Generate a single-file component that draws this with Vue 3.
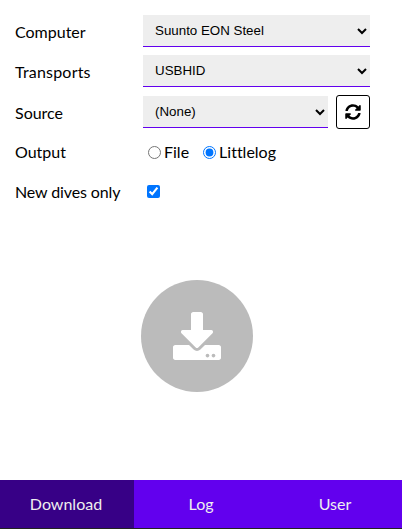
<script setup>
import { ref } from 'vue'

const computer = ref('Suunto EON Steel')
const transport = ref('USBHID')
const source = ref('')
const output = ref('littlelog')
const newOnly = ref(true)
const active = ref('Download')
const tabs = ['Download', 'Log', 'User']
</script>

<template>
  <div class="app">
    <main class="content">
      <form class="form" @submit.prevent>
        <div class="row">
          <label class="label" for="computer">Computer</label>
          <select id="computer" v-model="computer" class="select">
            <option>Suunto EON Steel</option>
          </select>
        </div>
        <div class="row transport">
          <label class="label" for="transport">Transports</label>
          <select id="transport" v-model="transport" class="select">
            <option>USBHID</option>
          </select>
        </div>
        <div class="row source">
          <label class="label" for="source">Source</label>
          <select id="source" v-model="source" class="select">
            <option value="">(None)</option>
          </select>
          <button type="button" class="refresh" aria-label="Reload">
            <svg viewBox="0 0 512 512" width="16" height="16" fill="currentColor">
              <path d="M370.72 133.28C339.458 104.008 298.888 87.962 255.848 88c-77.458.068-144.328 53.178-162.791 126.85-1.344 5.363-6.122 9.15-11.651 9.15H24.103c-7.498 0-13.194-6.807-11.807-14.176C33.933 94.924 134.813 8 256 8c66.448 0 126.791 26.136 171.315 68.685L463.03 40.97C478.149 25.851 504 36.559 504 57.941V192c0 13.255-10.745 24-24 24H345.941c-21.382 0-32.09-25.851-16.971-40.971l41.75-41.749zM32 296h134.059c21.382 0 32.09 25.851 16.971 40.971l-41.75 41.75c31.262 29.273 71.835 45.319 114.876 45.28 77.418-.07 144.315-53.144 162.787-126.849 1.344-5.363 6.122-9.15 11.651-9.15h57.304c7.498 0 13.194 6.807 11.807 14.176C478.067 417.076 377.187 504 256 504c-66.448 0-126.791-26.136-171.315-68.685L48.97 471.03C33.851 486.149 8 475.441 8 454.059V320c0-13.255 10.745-24 24-24z" />
            </svg>
          </button>
        </div>
        <div class="row output">
          <span class="label">Output</span>
          <label class="choice"><input v-model="output" type="radio" value="file" />File</label>
          <label class="choice"><input v-model="output" type="radio" value="littlelog" />Littlelog</label>
        </div>
        <div class="row dives">
          <label class="label" for="new-only">New dives only</label>
          <input id="new-only" v-model="newOnly" class="check" type="checkbox" />
        </div>
      </form>
      <div class="action">
        <button type="button" class="download" aria-label="Download">
          <svg viewBox="0 0 512 512" width="48" height="48" fill="currentColor">
            <path d="M216 0h80c13.3 0 24 10.7 24 24v168h87.7c17.8 0 26.7 21.5 14.1 34.1L269.7 378.3c-7.5 7.5-19.8 7.5-27.3 0L90.1 226.1c-12.6-12.6-3.7-34.1 14.1-34.1H192V24c0-13.3 10.7-24 24-24zm296 376v112c0 13.3-10.7 24-24 24H24c-13.3 0-24-10.7-24-24V376c0-13.3 10.7-24 24-24h146.7l49 49c20.1 20.1 52.5 20.1 72.6 0l49-49H488c13.3 0 24 10.7 24 24zm-124 88c0-11-9-20-20-20s-20 9-20 20 9 20 20 20 20-9 20-20zm64 0c0-11-9-20-20-20s-20 9-20 20 9 20 20 20 20-9 20-20z" />
          </svg>
        </button>
      </div>
    </main>
    <nav class="tabs">
      <button
        v-for="tab in tabs"
        :key="tab"
        type="button"
        class="tab"
        :class="{ active: tab === active }"
        @click="active = tab"
      >{{ tab }}</button>
    </nav>
  </div>
</template>

<style>
body {
  margin: 0;
  background: #fff;
}
</style>

<style scoped>
.app {
  box-sizing: border-box;
  display: flex;
  flex-direction: column;
  height: 100vh;
  border-bottom: 1px solid #222;
  font-family: Lato, sans-serif;
  font-size: 16px;
  line-height: 20px;
  font-variant-ligatures: none;
  color: #000;
}
.content {
  flex: 1;
  display: flex;
  flex-direction: column;
}
.form {
  padding: 15px 32px 0 15px;
}
.row {
  display: flex;
  align-items: center;
  height: 32px;
  margin-bottom: 8px;
}
.label {
  flex: 0 0 128px;
  padding-top: 2px;
}
.transport .label {
  letter-spacing: 0.2px;
}
.dives .label {
  letter-spacing: -0.12px;
}
.select {
  flex: 1;
  min-width: 0;
  height: 32px;
  box-sizing: border-box;
  padding: 0 0 0 8px;
  border: 0;
  border-bottom: 1px solid #6200ee;
  border-radius: 0;
  background: #eee;
  color: #000;
  font: 13.333px "Liberation Sans", Arial, sans-serif;
}
.source {
  height: 34px;
}
.refresh {
  display: flex;
  align-items: center;
  justify-content: center;
  box-sizing: border-box;
  width: 34px;
  height: 34px;
  margin-left: 8px;
  padding: 0;
  border: 1px solid #000;
  border-radius: 3px;
  background: #fff;
  color: #000;
}
.output {
  height: 30px;
}
.output .label {
  padding-top: 0;
}
.choice {
  display: flex;
  align-items: center;
  margin-right: 9px;
}
.choice input {
  width: 13px;
  height: 13px;
  margin: 0 3px 0 5px;
}
.check {
  width: 13px;
  height: 13px;
  margin: 0 4px;
}
.action {
  flex: 1;
  display: flex;
  justify-content: center;
  padding: 65px 8px 0 0;
}
.download {
  display: flex;
  align-items: center;
  justify-content: center;
  width: 112px;
  height: 112px;
  padding: 0;
  border: 0;
  border-radius: 50%;
  background: #bbb;
  color: #fff;
}
.tabs {
  display: flex;
  height: 48px;
  background: #6200ee;
}
.tab {
  flex: 1 1 0;
  padding: 0;
  border: 0;
  background: transparent;
  color: #eee;
  font: 16px/20px Lato, sans-serif;
}
.tab.active {
  text-indent: -2px;
  background: #370086;
}
</style>
